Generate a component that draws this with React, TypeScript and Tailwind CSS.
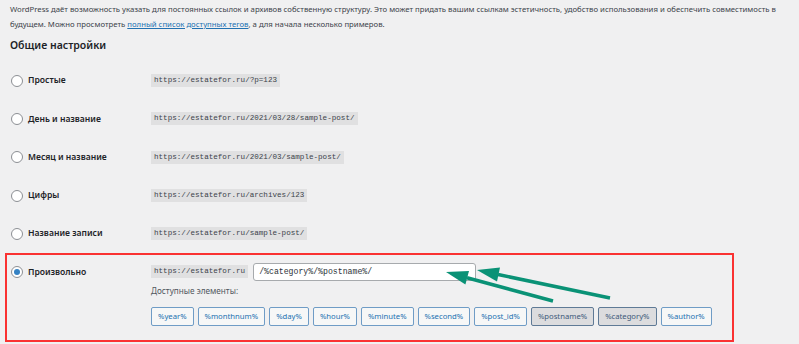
import React from 'react';

const rows = [
  { label: 'Простые', code: 'https://estatefor.ru/?p=123' },
  { label: 'День и название', code: 'https://estatefor.ru/2021/03/28/sample-post/' },
  { label: 'Месяц и название', code: 'https://estatefor.ru/2021/03/sample-post/' },
  { label: 'Цифры', code: 'https://estatefor.ru/archives/123' },
  { label: 'Название записи', code: 'https://estatefor.ru/sample-post/' },
];

const tags = [
  { t: '%year%' },
  { t: '%monthnum%' },
  { t: '%day%' },
  { t: '%hour%' },
  { t: '%minute%' },
  { t: '%second%' },
  { t: '%post_id%' },
  { t: '%postname%', on: true },
  { t: '%category%', on: true },
  { t: '%author%' },
];

function Radio({ checked }: { checked?: boolean }) {
  return (
    <span className="w-[12px] h-[12px] rounded-full border border-[#8c8f94] bg-white flex items-center justify-center shrink-0">
      {checked && <span className="w-[6px] h-[6px] rounded-full bg-[#3582c4]" />}
    </span>
  );
}

function Code({ children }: { children: React.ReactNode }) {
  return (
    <code className="inline-block shrink-0 h-[13px] leading-[13px] px-[3px] bg-[#e0e0e1] text-[#3c434a] text-[7.6px] font-['Liberation_Mono',monospace] whitespace-nowrap">
      {children}
    </code>
  );
}

export default function App() {
  return (
    <div className="relative w-[799px] h-[344px] overflow-hidden bg-[#f0f0f1] text-[#3c434a] font-['Noto_Sans',sans-serif] px-[10px] pt-[2px]">
      <p className="text-[7.75px] leading-[14.5px] whitespace-nowrap">
        WordPress даёт возможность указать для постоянных ссылок и архивов собственную структуру. Это может придать вашим ссылкам эстетичность, удобство использования и обеспечить совместимость в
        <br />
        будущем. Можно просмотреть{' '}
        <a className="text-[#2271b1] underline">полный список доступных тегов</a>, а для начала несколько примеров.
      </p>

      <h2 className="mt-[6px] text-[10.5px] leading-[16px] font-semibold text-[#1d2327]">Общие настройки</h2>

      <div className="mt-[8.5px]">
        {rows.map((r) => (
          <div key={r.label} className="h-[38.3px] flex items-center">
            <div className="w-[141px] shrink-0 flex items-center gap-[5px] pl-[1px]">
              <Radio />
              <span className="text-[8.6px] font-semibold text-[#1d2327]">{r.label}</span>
            </div>
            <Code>{r.code}</Code>
          </div>
        ))}
      </div>

      <div className="-ml-[5px] w-[729px] border-2 border-[#fa3232] pt-[8px] pb-[14px] pl-[4px] flex">
        <div className="w-[140px] shrink-0 h-[18px] flex items-center gap-[5px]">
          <Radio checked />
          <span className="text-[8.6px] font-semibold text-[#1d2327]">Произвольно</span>
        </div>
        <div className="flex flex-col">
          <div className="flex items-center gap-[5px]">
            <Code>https://estatefor.ru</Code>
            <div className="w-[223px] h-[18px] rounded-[3px] border border-[#a7aaad] bg-white px-[5px] flex items-center text-[8.2px] text-[#2c3338] font-['Liberation_Mono',monospace]">
              /%category%/%postname%/
            </div>
          </div>
          <div className="mt-[3px] text-[8.2px] leading-[14px] text-[#50575e]">Доступные элементы:</div>
          <div className="mt-[9px] flex gap-[4px]">
            {tags.map((b) => (
              <span
                key={b.t}
                className={
                  b.on
                    ? 'h-[19px] px-[6px] flex items-center rounded-[2px] border border-[#5f7a96] bg-[#dcdcde] text-[7.7px] text-[#3d5a7a]'
                    : 'h-[19px] px-[6px] flex items-center rounded-[2px] border border-[#6f9cc6] bg-[#f6f7f7] text-[7.7px] text-[#2271b1]'
                }
              >
                {b.t}
              </span>
            ))}
          </div>
        </div>
      </div>

      <svg className="absolute inset-0 pointer-events-none" width="799" height="344" viewBox="0 0 799 344">
        <line x1="610" y1="298" x2="498" y2="274.5" stroke="#0a9276" strokeWidth="3.5" />
        <polygon points="477,270 500,267.6 497,281.4" fill="#0a9276" />
        <line x1="553" y1="301" x2="467" y2="277.8" stroke="#0a9276" strokeWidth="3.5" />
        <polygon points="446,272 469,271 465.4,284.5" fill="#0a9276" />
      </svg>
    </div>
  );
}
